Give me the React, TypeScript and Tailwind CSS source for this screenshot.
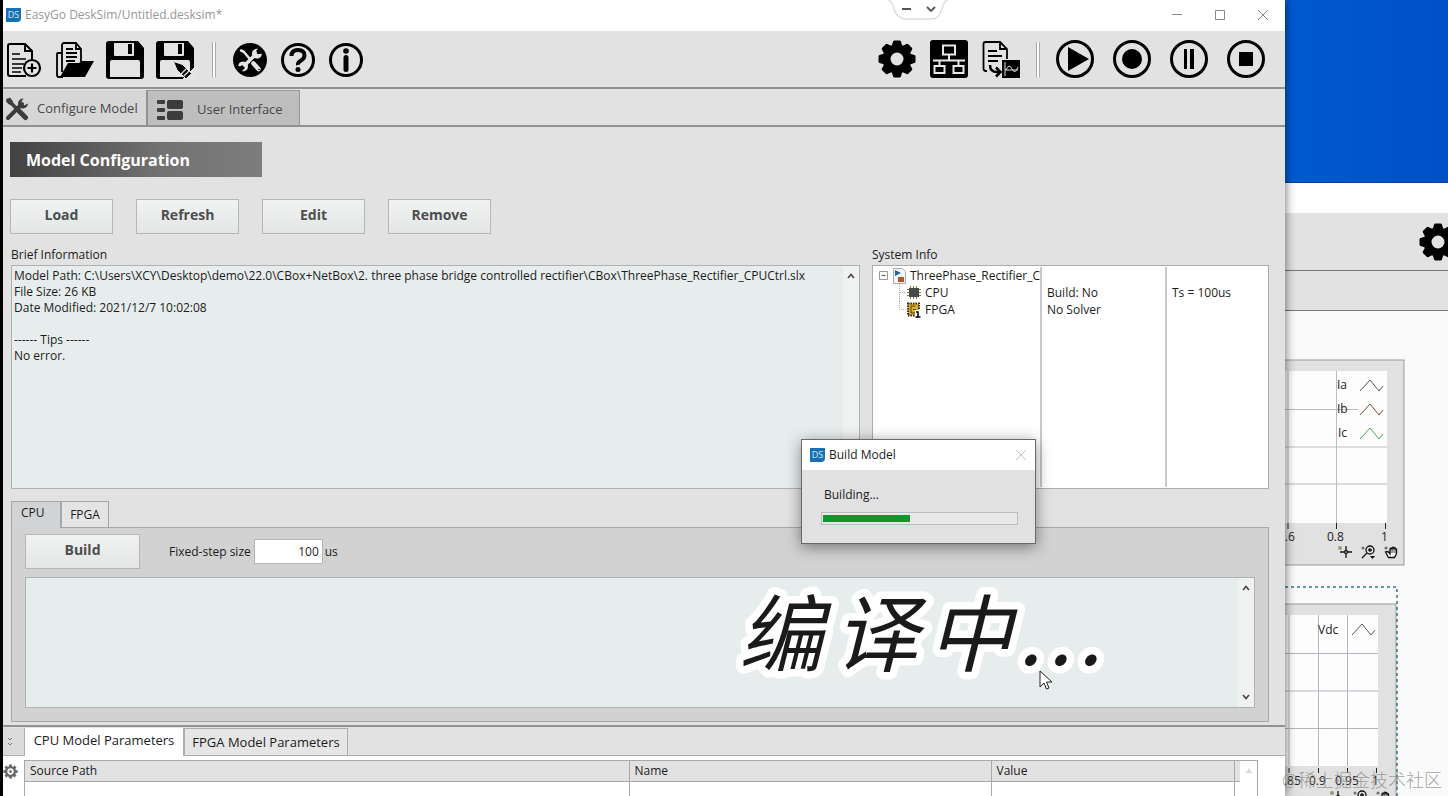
import React, { useState } from 'react';

const BRIEF_INFO = [
  'Model Path: C:\\Users\\XCY\\Desktop\\demo\\22.0\\CBox+NetBox\\2. three phase bridge controlled rectifier\\CBox\\ThreePhase_Rectifier_CPUCtrl.slx',
  'File Size: 26 KB',
  'Date Modified: 2021/12/7 10:02:08',
  '',
  '------ Tips ------',
  'No error.',
].join('\n');

const GEAR_TEETH = [0, 45, 90, 135, 180, 225, 270, 315];

const GearIcon: React.FC = () => (
  <svg className="w-[38px] h-[38px] shrink-0" viewBox="0 0 38 38" fill="none" stroke="#000">
    <circle cx="19" cy="19" r="10.5" strokeWidth="8" />
    {GEAR_TEETH.map((a) => (
      <path key={a} d="M16.500 2h5l1.500 5h-8z" fill="#000" strokeWidth="3" strokeLinejoin="round" transform={`rotate(${a} 19 19)`} />
    ))}
  </svg>
);

const NewIcon = () => (
  <svg className="w-[38px] h-[38px]" viewBox="0 0 38 38" fill="none" stroke="#000" strokeWidth="2">
    <path d="M20 35H4a2 2 0 0 1-2-2V5a2 2 0 0 1 2-2h15l7 7v11" />
    <path d="M19 3v7h7" />
    <path d="M6 13h8M6 18h14M6 23h12M6 27h10M6 31h9" strokeWidth="1.6" />
    <circle cx="26" cy="27" r="8" fill="#e4e4e4" strokeWidth="2.2" />
    <path d="M26 22.500v9M21.500 27h9" strokeWidth="2.2" />
  </svg>
);

const OpenIcon = () => (
  <svg className="w-[38px] h-[38px]" viewBox="0 0 38 38" fill="none" stroke="#000" strokeWidth="1.8">
    <path d="M6 12H2a1 1 0 0 0-1 1v21q0 2 2 2h4" />
    <path d="M6 31V4a2 2 0 0 1 2-2h12l5 6v13" />
    <path d="M20 2v6h5" />
    <path d="M10 8h7M10 12h11M10 16h11M10 20h9" />
    <path d="M12 22h11l3-2h12l-9 16H4z" fill="#000" stroke="none" />
  </svg>
);

const SaveIcon: React.FC<{ pencil?: boolean }> = ({ pencil }) => (
  <svg className="w-[38px] h-[38px]" viewBox="0 0 38 38">
    <path d="M3 0h29l6 7v28a3 3 0 0 1-3 3H3a3 3 0 0 1-3-3V3a3 3 0 0 1 3-3z" />
    <path d="M8 2h20v12a1 1 0 0 1-1 1H9a1 1 0 0 1-1-1z" fill="#e4e4e4" />
    <path d="M22 3h4v10h-4z" />
    <path d="M4 21q0-2 2-2h26q2 0 2 2v15H4z" fill="#e4e4e4" />
    {pencil && (
      <g stroke="#e4e4e4" strokeWidth="1">
        <path d="M26 39l13-13v13z" fill="#e4e4e4" />
        <path d="M17.500 20.500l9 3 9 9-5.500 5.500-9-9z" />
        <path d="M25 33l5.500-5.500M27.500 35.500l5.500-5.500" strokeWidth="1.3" />
      </g>
    )}
  </svg>
);

const ToolsRoundIcon = () => (
  <svg className="w-[34px] h-[34px]" viewBox="0 0 34 34">
    <circle cx="17" cy="17" r="17" />
    <g stroke="#e4e4e4" fill="none" strokeLinecap="round">
      <path d="M8 7.500l2.500 1 6 7" strokeWidth="2.500" />
      <path d="M20.500 20.500l5 5.500" strokeWidth="4.500" />
      <path d="M11 23l12-12" strokeWidth="3.500" strokeLinecap="butt" />
      <path d="M26 7a4.200 4.200 0 1 0 2 4.500l-3.500.5-2-2z" strokeWidth="1.500" fill="#e4e4e4" strokeLinejoin="round" />
      <path d="M8 27a4.200 4.200 0 1 0-2-4.500l3.500-.5 2 2z" strokeWidth="1.500" fill="#e4e4e4" strokeLinejoin="round" />
    </g>
    <path d="M27 4l3 3-4 4-3-3z" />
    <path d="M4 27l5-5 3 3-4 4z" />
    <circle cx="26" cy="26.500" r=".8" />
  </svg>
);

const HelpIcon = () => (
  <svg className="w-[34px] h-[34px]" viewBox="0 0 34 34" fill="none" stroke="#000">
    <circle cx="17" cy="17" r="15.500" strokeWidth="3" />
    <path d="M10.500 13q0-6 6.500-6t6.500 5.500q0 3-3.500 5t-3 4.500" strokeWidth="4" />
    <circle cx="17" cy="26.500" r="2.500" fill="#000" stroke="none" />
  </svg>
);

const InfoIcon = () => (
  <svg className="w-[34px] h-[34px]" viewBox="0 0 34 34" fill="none" stroke="#000">
    <circle cx="17" cy="17" r="15.500" strokeWidth="3" />
    <circle cx="17" cy="8" r="2.800" fill="#000" stroke="none" />
    <path d="M17 14.500v12" strokeWidth="5" strokeLinecap="round" />
  </svg>
);

const NetworkIcon = () => (
  <svg className="w-[38px] h-[38px]" viewBox="0 0 38 38" fill="none" stroke="#e9e9e9" strokeWidth="2">
    <rect width="38" height="38" rx="3" fill="#000" stroke="none" />
    <path d="M13 5.500h12v9H13zM4.500 26h10v7h-10zM23.500 26h10v7h-10zM19 14.500v6M3 20.500h32M9.500 20.500v5.500M28.500 20.500v5.500" />
  </svg>
);

const ExportIcon = () => (
  <svg className="w-[38px] h-[38px]" viewBox="0 0 38 38" fill="none" stroke="#000" strokeWidth="1.8">
    <path d="M5 31H4q-2.500 0-2.500-2.500V4q0-2 2-2H18l7 7v10" />
    <path d="M18 2v7h7M6 11h9M6 16h14M6 21h10" />
    <path d="M8 25q0 7 7 7h3M14 27.500l4.500 4.500-4.500 4.500" strokeWidth="2.500" />
    <rect x="20" y="20" width="18" height="18" fill="#000" stroke="none" />
    <path d="M23 22v14M23 30h13M24 30q3-7 6-1t6-2" stroke="#ddd" strokeWidth="1" />
  </svg>
);

const RoundIcon: React.FC<{ children: React.ReactNode }> = ({ children }) => (
  <svg className="w-[38px] h-[38px]" viewBox="0 0 38 38">
    <circle cx="19" cy="19" r="17.500" fill="none" stroke="#000" strokeWidth="3" />
    {children}
  </svg>
);

const ConfigureIcon = () => (
  <svg className="w-6 h-6 shrink-0" viewBox="0 0 24 24" fill="none" stroke="#3c3c3c">
    <path d="M3 3l8 8" strokeWidth="3.500" strokeLinecap="round" />
    <path d="M14.500 14.500l6 6" strokeWidth="5" strokeLinecap="round" />
    <path d="M3 21L17 7" strokeWidth="4" strokeLinecap="round" />
    <path d="M18.500 1.500a5 5 0 1 0 4.500 5l-4 2-3-3z" fill="#3c3c3c" stroke="none" />
    <path d="M2 2.500l3-2 3 4-1 3-3 0-3-3z" fill="#3c3c3c" stroke="none" />
  </svg>
);

const LayoutIcon = () => (
  <svg className="w-[26px] h-5 shrink-0" viewBox="0 0 26 20" fill="#3c3c3c">
    <rect y="0" width="8" height="4" rx="1" />
    <rect y="8" width="8" height="4" rx="1" />
    <rect y="16" width="8" height="4" rx="1" />
    <rect x="10" y="0" width="16" height="9" rx="2" />
    <rect x="10" y="11" width="16" height="9" rx="2" />
  </svg>
);

const AppLogo: React.FC = () => (
  <span className="w-[15px] h-[14px] shrink-0 bg-[#1870b4] text-[9px] leading-[14px] text-center text-[#cfeaff] rounded-br-sm">DS</span>
);

const Chevron: React.FC<{ down?: boolean }> = ({ down }) => (
  <svg className="w-2 h-2" viewBox="0 0 8 8" fill="none" stroke="#444" strokeWidth="1.600">
    <path d={down ? 'M1 2l3 3.500L7 2' : 'M1 6l3-3.500L7 6'} />
  </svg>
);

const ToolbarDivider = () => <span className="w-1 h-[35px] border-x border-[#aaa] bg-white shrink-0" />;

const GrayButton: React.FC<{ label: string; wide?: boolean }> = ({ label, wide }) => (
  <button className={`${wide ? 'w-[115px]' : 'w-[103px]'} h-[35px] pb-1 border border-[#b4b6b7] bg-linear-to-b from-[#f1f2f2] to-[#e4e5e5] text-[14px] font-bold text-[#4c4e4f]`}>
    {label}
  </button>
);

const ChartTools: React.FC<{ x: number; y: number }> = ({ x, y }) => (
  <g transform={`translate(${x} ${y})`} fill="none" stroke="#111" strokeWidth="1.300">
    <circle cx="2" cy="2" r="2" fill="#8ba36b" stroke="none" />
    <path d="M8 0v12M2 6h12" />
    <circle cx="8" cy="6" r="1.500" fill="#ddd" />
    <circle cx="25" cy="2" r="1.500" fill="#67755b" stroke="none" />
    <circle cx="32" cy="4" r="4" />
    <path d="M32 2v4M30 4h4M29 7l-5 5" />
    <path d="M32 10h5l-2.500 3z" fill="#111" stroke="none" />
    <circle cx="48" cy="2" r="1.500" fill="#67755b" stroke="none" />
    <path d="M47.500 6l3 5.500h6l2-4V3q-1.500-1-1.500 1V2q-1.500-1.500-1.500 1V1.500q-1.500-1-1.500 1V3q-1.500-1.500-2 0v5l-2-2.500z" fill="#fff" />
    <path d="M55 3v4M57 4v3M53 3v4" strokeWidth=".8" />
  </g>
);

const WaveMark: React.FC<{ x: number; y: number; color: string }> = ({ x, y, color }) => (
  <path d="M0 12L10 1l9 11 4-5" transform={`translate(${x} ${y})`} fill="none" stroke={color} strokeWidth="1" />
);

/* Second window, seen behind the main one */
const BackgroundWindow: React.FC = () => (
  <div className="w-[163px] shrink-0 flex flex-col bg-[#fafafa] text-[12px]">
    <div className="h-[183px] shrink-0 border-b border-[#0b4494] bg-linear-to-r from-[#005acf] to-[#004fc9]" />
    <div className="h-[30px] shrink-0 bg-white" />
    <div className="h-[58px] shrink-0 bg-[#e2e2e2] border-b border-[#777] flex items-center pl-[134px]">
      <GearIcon />
    </div>
    <div className="h-[40px] shrink-0 bg-[#e2e2e2] border-b border-[#777]" />
    <svg className="w-[163px] h-[486px] shrink-0" viewBox="0 0 163 486" fontSize="12" fill="#222">
      <rect x="-5" y="49" width="124" height="205" fill="#e1e1e1" stroke="#999" />
      <rect x="0" y="60" width="102" height="152" fill="#fdfdfd" />
      <path d="M0 98.500h73M0 136h102M0 173h102M3 60v152M51.500 60v152" stroke="#b9bec4" fill="none" />
      <path d="M3 212v6M51.500 212v6M100.500 212v6" stroke="#222" fill="none" />
      <text x="52" y="78">Ia</text>
      <text x="52" y="102">Ib</text>
      <text x="53" y="126">Ic</text>
      <WaveMark x={75} y={68} color="#555" />
      <WaveMark x={75} y={92} color="#7a4a3c" />
      <WaveMark x={75} y={116} color="#4aa25c" />
      <text x="-7" y="230">0.6</text>
      <text x="42" y="230">0.8</text>
      <text x="96" y="230">1</text>
      <ChartTools x={53} y={235} />

      <rect x="-5" y="293" width="116" height="210" fill="#e1e1e1" stroke="#999" />
      <path d="M0 276h112v210" fill="none" stroke="#3c7480" strokeWidth="1.500" strokeDasharray="3 3" />
      <rect x="0" y="304" width="93" height="151" fill="#fdfdfd" />
      <path d="M0 342.500h93M0 380h93M0 417.500h93M4 304v151M33.500 304v151M62.500 304v151" stroke="#b0b5be" fill="none" />
      <path d="M4 457v5M33.500 457v5M62.500 457v5M91.500 457v5" stroke="#222" fill="none" />
      <text x="33" y="323">Vdc</text>
      <WaveMark x={67} y={312} color="#555" />
      <text x="-8" y="474">0.85</text>
      <text x="24" y="474">0.9</text>
      <text x="50" y="474">0.95</text>
      <text x="87" y="474">1</text>
      <ChartTools x={45} y={480} />
    </svg>
  </div>
);

const BuildDialog: React.FC<{ progress: number }> = ({ progress }) => (
  <div role="dialog" aria-label="Build Model" className="absolute left-[798px] top-[439px] w-[235px] h-[105px] border border-[#6a6a6a] bg-[#e1e1e1] shadow-[0_3px_14px_rgba(0,0,0,0.45)] flex flex-col">
    <div className="h-[30px] bg-white flex items-center px-2 gap-1">
      <AppLogo />
      <span className="flex-1">Build Model</span>
      <button aria-label="Close">
        <svg className="w-3 h-3" viewBox="0 0 12 12" stroke="#c4c4c4" fill="none"><path d="M1 1l10 10M11 1L1 11" /></svg>
      </button>
    </div>
    <div className="px-[19px] pt-4">
      <div className="px-[3px] leading-[18px]">Building...</div>
      <div role="progressbar" aria-valuenow={progress} className="mt-2 h-[13px] w-[197px] border border-[#bcbcbc] bg-[#e8e8e8] p-px py-[2px]">
        <div className="h-full bg-[#0b982d]" style={{ width: `${progress}%` }} />
      </div>
    </div>
  </div>
);

const App: React.FC = () => {
  const [stepSize, setStepSize] = useState('100');

  return (
    <div className="relative flex h-screen overflow-hidden bg-black pl-[3px] font-['Open_Sans','Noto_Sans_CJK_SC',sans-serif] text-[12px] text-[#1c1c1c]">
      <main className="relative z-10 flex-1 min-w-0 flex flex-col bg-[#e2e2e2] shadow-[0_0_10px_rgba(0,0,0,0.6)]">
        {/* Title bar */}
        <header className="h-[31px] shrink-0 bg-white flex items-center pl-[3px] pr-4 pb-px text-[#979797]">
          <AppLogo />
          <span className="flex-1 pl-1">EasyGo DeskSim/Untitled.desksim*</span>
          <div className="flex items-center gap-[31px]">
            <button aria-label="Minimize"><svg className="w-3 h-3" viewBox="0 0 12 12" stroke="#888" fill="none"><path d="M1 5.500h10" /></svg></button>
            <button aria-label="Maximize"><svg className="w-3 h-3" viewBox="0 0 12 12" stroke="#888" fill="none"><path d="M1.500 1.500h9v9h-9z" /></svg></button>
            <button aria-label="Close"><svg className="w-3 h-3" viewBox="0 0 12 12" stroke="#888" fill="none"><path d="M1 1l10 10M11 1L1 11" /></svg></button>
          </div>
        </header>
        <svg className="absolute left-[885px] top-0 w-[60px] h-[22px]" viewBox="0 0 60 22" fill="none">
          <path d="M0 0q4 1 6 9t10 10h28q7 0 10-10t6-9" fill="#fff" stroke="#dedede" strokeWidth="1.500" />
          <path d="M14 9h9M39 7l4 4 4-4" stroke="#555" strokeWidth="1.800" />
        </svg>

        {/* Toolbar */}
        <div className="h-[58px] shrink-0 border-b-2 border-[#929292] flex items-center justify-between pl-[3px] pr-5">
          <div className="flex items-center pt-px">
            <div className="flex gap-3 pr-[18px]">
              <button aria-label="New"><NewIcon /></button>
              <button aria-label="Open"><OpenIcon /></button>
              <button aria-label="Save"><SaveIcon /></button>
              <button aria-label="Save as"><SaveIcon pencil /></button>
            </div>
            <ToolbarDivider />
            <div className="flex gap-[14px] pl-[17px]">
              <button aria-label="Tools"><ToolsRoundIcon /></button>
              <button aria-label="Help"><HelpIcon /></button>
              <button aria-label="About"><InfoIcon /></button>
            </div>
          </div>
          <div className="flex items-center">
            <div className="flex gap-[14px] pr-4">
              <button aria-label="Settings"><GearIcon /></button>
              <button aria-label="Network"><NetworkIcon /></button>
              <button aria-label="Export"><ExportIcon /></button>
            </div>
            <ToolbarDivider />
            <div className="flex gap-[19px] pl-4">
              <button aria-label="Run"><RoundIcon><path d="M12 7v24l21-12z" /></RoundIcon></button>
              <button aria-label="Record"><RoundIcon><circle cx="19" cy="19" r="10" /></RoundIcon></button>
              <button aria-label="Pause"><RoundIcon><path d="M14 9h3v20h-3zM20 9h4v20h-4z" /></RoundIcon></button>
              <button aria-label="Stop"><RoundIcon><path d="M12 12h14v14H12z" /></RoundIcon></button>
            </div>
          </div>
        </div>

        {/* Page tabs */}
        <nav className="h-[38px] shrink-0 border-b-2 border-[#929292] flex pt-px text-[13px] text-[#484848]">
          <button className="w-[145px] border-r-2 border-[#929292] bg-[#d6d6d6] flex items-center gap-2 pl-[2px] pt-[3px] whitespace-nowrap"><ConfigureIcon />Configure Model</button>
          <button className="w-[152px] border-r border-t border-[#999] bg-[#bebebe] flex items-center gap-[14px] pl-[9px] pt-[3px] whitespace-nowrap"><LayoutIcon />User Interface</button>
        </nav>

        <section className="h-[600px] shrink-0 border-b-2 border-[#929292] pl-[7px] pr-4 pt-[15px] flex flex-col">
          <h1 className="w-[252px] h-[35px] shrink-0 bg-linear-to-r from-[#424242] via-[#727272] via-60% to-[#7d7d7d] pl-4 text-[16px] leading-9 font-bold text-white">Model Configuration</h1>
          <div className="flex gap-[23px] mt-[22px]">
            <GrayButton label="Load" />
            <GrayButton label="Refresh" />
            <GrayButton label="Edit" />
            <GrayButton label="Remove" />
          </div>

          <div className="flex gap-3 mt-3 pl-px">
            <div className="flex-1 min-w-0">
              <label htmlFor="brief" className="block h-[19px] leading-[18px]">Brief Information</label>
              <div className="h-[224px] border border-[#adb2b4] bg-[#e7eded] flex">
                <textarea id="brief" readOnly value={BRIEF_INFO} className="flex-1 resize-none overflow-hidden pl-[2px] pt-[2px] leading-4 outline-none" />
                <div className="w-4 bg-[#f0f1f1] flex justify-center pt-[6px]"><Chevron /></div>
              </div>
            </div>
            <div className="w-[397px] shrink-0">
              <div className="h-[19px] leading-[18px]">System Info</div>
              <div className="h-[224px] border border-[#adadad] bg-white py-px">
                <table className="w-full h-full table-fixed leading-[17px] [&_td]:p-0 [&_td]:border-r-2 [&_td]:border-[#c9c9c9] [&_td:last-child]:border-r-0">
                  <colgroup><col className="w-[168px]" /><col className="w-[125px]" /><col /></colgroup>
                  <tbody>
                    <tr className="h-[17px]">
                      <td className="overflow-hidden">
                        <div className="flex items-center pl-[6px] h-[17px] whitespace-nowrap overflow-hidden">
                          <svg className="w-[28px] h-[17px] shrink-0 mr-[3px]" viewBox="0 0 28 17" fill="none">
                            <path d="M.5 4.500h8v8h-8z" stroke="#999" /><path d="M2.500 8.500h4" stroke="#555" />
                            <path d="M14.500 1.500h9l3 3v12h-12z" fill="#f3f6f8" stroke="#aaa" />
                            <path d="M16 3l6 3-6 3z" fill="#24638c" /><path d="M19 10h6v5h-6z" fill="#b2552f" />
                          </svg>
                          ThreePhase_Rectifier_CPUCtrl
                        </div>
                      </td>
                      <td /><td />
                    </tr>
                    <tr className="h-[17px]">
                      <td>
                        <div className="flex items-center pl-[26px] h-[17px]">
                          <svg className="w-[22px] h-[17px] mr-1" viewBox="0 0 22 17" fill="none">
                            <path d="M.5 0v17M1 8.500h6" stroke="#aaa" strokeDasharray="1 1" />
                            <path d="M11.500 2v13M14.500 2v13M17.500 2v13M8 5.500h14M8 8.500h14M8 11.500h14" stroke="#7d7d45" />
                            <path d="M10 4h10v9H10z" fill="#454b49" />
                          </svg>
                          CPU
                        </div>
                      </td>
                      <td className="pl-[5px]!">Build: No</td>
                      <td className="pl-[5px]!">Ts = 100us</td>
                    </tr>
                    <tr className="h-[17px]">
                      <td>
                        <div className="flex items-center pl-[26px] h-[17px]">
                          <svg className="w-[22px] h-[17px] mr-1" viewBox="0 0 22 17" fill="none">
                            <path d="M.5 0v8.500h6" stroke="#aaa" strokeDasharray="1 1" />
                            <path d="M9 2.500h11v12H9z" fill="#d8ad35" stroke="#3b2c0d" strokeWidth="2" strokeDasharray="1.500 1" />
                            <path d="M12 5h4M12 5v7h4M14 8.500h3" stroke="#5a430f" />
                            <path d="M16 9h6v8h-6z" fill="#fff" /><path d="M17 11h2v5M16.500 16h5" stroke="#000" strokeWidth="1.500" />
                          </svg>
                          FPGA
                        </div>
                      </td>
                      <td className="pl-[5px]!">No Solver</td>
                      <td />
                    </tr>
                    <tr><td /><td /><td /></tr>
                  </tbody>
                </table>
              </div>
            </div>
          </div>

          <div className="flex mt-3 pl-px h-[26px] shrink-0">
            <button className="relative z-10 w-[49px] -mb-px border border-r-0 border-b-0 border-[#a4a6a7] bg-[#d2d3d4] pl-[9px] pb-[4px] text-left">CPU</button>
            <button className="w-[49px] border border-l-2 border-b-0 border-[#a4a6a7] bg-[#e4e4e4]">FPGA</button>
          </div>
          <div className="h-[195px] ml-px border border-[#a4a6a7] bg-[#d2d2d2] px-[13px] pt-[6px]">
            <div className="flex items-center h-[35px]">
              <GrayButton label="Build" wide />
              <label htmlFor="step" className="pl-[29px] pr-[3px]">Fixed-step size</label>
              <input id="step" value={stepSize} onChange={(e) => setStepSize(e.target.value)} className="w-[69px] h-[25px] border border-[#b5b5b5] bg-white text-right pr-[3px]" />
              <span className="pl-[2px]">us</span>
            </div>
            <div className="mt-2 h-[131px] border border-[#adb2b4] bg-[#e7eded] flex">
              <textarea aria-label="Build log" readOnly className="flex-1 resize-none outline-none" />
              <div className="w-4 bg-[#f0f1f1] flex flex-col items-center justify-between py-[6px]"><Chevron /><Chevron down /></div>
            </div>
          </div>
        </section>

        {/* Parameters */}
        <section className="flex-1 min-h-0 bg-white flex flex-col">
          <div className="h-[29px] shrink-0 border-b border-[#adadad] bg-[#e2e2e2] flex text-[13px] pt-px">
            <button aria-label="Collapse" className="w-[22px] border-r border-[#adadad] bg-[#dadcdc] pl-1 pt-px">
              <svg className="w-[6px] h-[10px]" viewBox="0 0 6 10" fill="none" stroke="#777"><path d="M1 1l2 2 2-2M1 6l2 2 2-2" /></svg>
            </button>
            <button className="w-[158px] -mb-px bg-white pb-[3px]">CPU Model Parameters</button>
            <button className="w-[165px] border border-l-2 border-b-0 border-[#adadad] bg-[#e6e6e6] pt-px">FPGA Model Parameters</button>
          </div>
          <div className="flex-1 min-h-0 flex pt-1 pr-[27px] overflow-hidden">
            <div className="w-[21px] shrink-0 pt-1">
              <svg className="w-[15px] h-[15px]" viewBox="0 0 38 38" fill="none" stroke="#666">
                <circle cx="19" cy="19" r="11" strokeWidth="6" />
                <circle cx="19" cy="19" r="3" fill="#666" />
                {GEAR_TEETH.map((a) => <path key={a} d="M19 1v6" strokeWidth="7" transform={`rotate(${a} 19 19)`} />)}
              </svg>
            </div>
            <div className="flex-1 flex border border-b-0 border-[#a8a8a8]">
              <table className="flex-1 h-full table-fixed border-collapse [&_td]:border-r [&_td]:border-[#a8a8a8]">
                <colgroup><col className="w-[604px]" /><col className="w-[362px]" /><col /><col className="w-[6px]" /></colgroup>
                <thead>
                  <tr className="h-5 bg-[#e2e2e2] border-b border-[#a8a8a8] text-left [&>th]:border-r [&>th]:border-[#a8a8a8] [&>th]:p-0 [&>th]:pl-[5px] [&>th]:font-normal">
                    <th>Source Path</th><th>Name</th><th>Value</th><td className="border-r-0!" />
                  </tr>
                </thead>
                <tbody>
                  <tr className="h-10"><td /><td /><td /><td className="border-r-0!" /></tr>
                </tbody>
              </table>
              <div className="w-[17px] flex justify-center pt-[7px]">
                <svg className="w-[6px] h-[6px]" viewBox="0 0 6 6"><path d="M3 0l3 5H0z" fill="#d6d6d6" /></svg>
              </div>
            </div>
          </div>
        </section>

        <BuildDialog progress={45} />
      </main>

      <BackgroundWindow />

      {/* Video caption */}
      <svg className="absolute z-20 left-[730px] top-[575px] w-[390px] h-[115px] italic font-['Noto_Sans_CJK_SC',sans-serif]" viewBox="0 0 390 115">
        <text x="9 104 198 288 318 348" y="90" fontSize="84" fill="#1a1a1a" stroke="#fff" strokeWidth="15" strokeLinejoin="round" paintOrder="stroke">编译中...</text>
      </svg>
      <svg className="absolute z-20 left-[1039px] top-[670px] w-[14px] h-[21px]" viewBox="0 0 14 21">
        <path d="M1 1v16l4-4 2.500 6 2.500-1-2.500-6H13z" fill="#fff" stroke="#222" />
      </svg>
      <div className="absolute z-20 right-[6px] bottom-[2px] text-[18px] leading-7 whitespace-nowrap font-light text-[#8a8a8a]/80">@稀土掘金技术社区</div>
    </div>
  );
};

export default App;
